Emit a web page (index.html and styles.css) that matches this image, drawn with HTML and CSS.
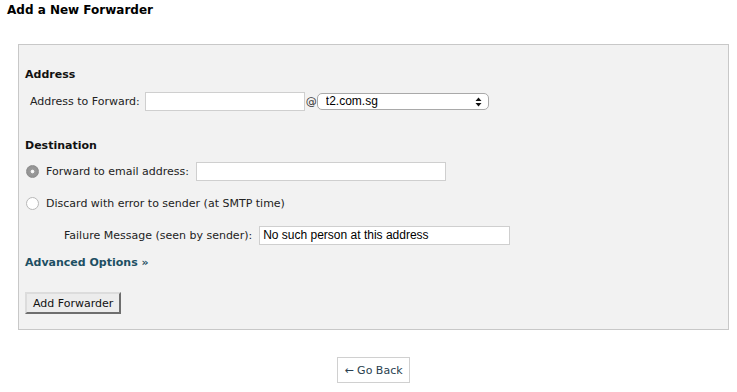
FILE: index.html
```html
<!DOCTYPE html>
<html>
<head>
<meta charset="utf-8">
<title>Add a New Forwarder</title>
<link rel="stylesheet" href="styles.css">
</head>
<body>
<h1 class="title">Add a New Forwarder</h1>
<form class="panel">
  <h2 class="section">Address</h2>
  <div class="row row-address">
    <label class="label">Address to Forward:</label>
    <input class="field field-addr" type="text">
    <span class="at">@</span>
    <div class="select-wrap">
      <select class="domain"><option>t2.com.sg</option></select>
      <svg class="select-arrow" width="7" height="10" viewBox="0 0 7 10"><path d="M3.5 0.5 L6.5 4 H0.5 Z M3.5 9.5 L6.5 6 H0.5 Z" fill="#111"/></svg>
    </div>
  </div>

  <h2 class="section section-dest">Destination</h2>
  <div class="row radio-row">
    <input class="radio" type="radio" name="fwd" checked>
    <label class="radio-label">Forward to email address:</label>
    <input class="field field-email" type="text">
  </div>
  <div class="row radio-row radio-row-2">
    <input class="radio" type="radio" name="fwd">
    <label class="radio-label">Discard with error to sender (at SMTP time)</label>
  </div>
  <div class="row failure-row">
    <label class="label label-fail">Failure Message (seen by sender):</label>
    <input class="field field-fail" type="text" value="No such person at this address">
  </div>
  <a class="advanced" href="#">Advanced Options »</a>
  <div class="actions">
    <button class="btn" type="button">Add Forwarder</button>
  </div>
</form>
<div class="back-wrap">
  <a class="back" href="#">← Go Back</a>
</div>
</body>
</html>
```
FILE: styles.css
```css
html, body {
  margin: 0;
  padding: 0;
  background: #fff;
}
body {
  font-family: "DejaVu Sans", Verdana, sans-serif;
  font-size: 11px;
  color: #111;
}
.title {
  margin: 0;
  padding: 3px 0 0 7px;
  font-size: 12px;
  font-weight: bold;
  line-height: 15px;
  color: #000;
}
.panel {
  box-sizing: border-box;
  width: 711px;
  height: 286px;
  margin: 26px 0 0 18px;
  padding: 22px 6px 0 6px;
  background: #f2f2f2;
  border: 1px solid #c8c8c8;
  display: flex;
  flex-direction: column;
  align-items: flex-start;
}
.section {
  margin: 0;
  font-size: 11px;
  font-weight: bold;
  line-height: 16px;
  color: #111;
}
.section-dest {
  margin-top: 27px;
}
.row {
  display: flex;
  align-items: center;
  height: 20px;
}
.row-address {
  margin-top: 8px;
  padding-left: 5px;
}
.label {
  margin-right: 5px;
  color: #222;
}
.label-fail {
  margin-right: 7px;
}
.field {
  box-sizing: border-box;
  height: 19px;
  margin: 0;
  padding: 1px 3px;
  background: #fff;
  border: 1px solid #cfcfcf;
  border-radius: 0;
  font-family: "Liberation Sans", Arial, sans-serif;
  font-size: 12px;
  color: #000;
  outline: none;
}
.field-addr { width: 160px; }
.field-email { width: 250px; }
.field-fail { width: 251px; }
.at {
  margin: 0 0 0 1px;
  font-size: 11px;
  color: #333;
}
.select-wrap {
  position: relative;
  width: 172px;
  height: 17px;
}
.domain {
  -webkit-appearance: none;
  appearance: none;
  box-sizing: border-box;
  width: 172px;
  height: 17px;
  margin: 0;
  padding: 0 0 0 8px;
  background: #fff;
  border: 1px solid #a9a9a9;
  border-radius: 5px;
  font-family: "Liberation Sans", Arial, sans-serif;
  font-size: 12px;
  line-height: 15px;
  color: #000;
  outline: none;
}
.select-arrow {
  position: absolute;
  right: 7px;
  top: 4px;
  pointer-events: none;
}
.radio-row {
  margin-top: 7px;
}
.radio-row-2 {
  margin-top: 12px;
}
.radio {
  -webkit-appearance: none;
  appearance: none;
  box-sizing: border-box;
  width: 13px;
  height: 13px;
  margin: 0 7px 0 1px;
  border: 1px solid #b8b8b8;
  border-radius: 50%;
  background: #fff;
  position: relative;
}
.radio:checked {
  border-color: #8c8c8c;
  background: radial-gradient(circle, #ffffff 0, #eeeeee 1.6px, #9a9a9a 2.2px, #8e8e8e 100%);
}
.radio-label {
  color: #222;
  margin-right: 7px;
}
.failure-row {
  margin-top: 12px;
  padding-left: 39px;
}
.advanced {
  margin-top: 10px;
  font-weight: bold;
  line-height: 16px;
  color: #1d4f63;
  text-decoration: none;
}
.actions {
  margin-top: 21px;
}
.btn {
  box-sizing: border-box;
  height: 22px;
  margin: 0;
  padding: 0 6px;
  background: #ececec;
  border: 2px solid;
  border-color: #dcdcdc #6e6e6e #6e6e6e #dcdcdc;
  border-radius: 0;
  font-family: "DejaVu Sans", Verdana, sans-serif;
  font-size: 11px;
  color: #111;
}
.back-wrap {
  width: 711px;
  margin-left: 18px;
  margin-top: 27px;
  display: flex;
  justify-content: center;
}
.back {
  box-sizing: border-box;
  height: 26px;
  padding: 0 6px;
  display: flex;
  align-items: center;
  border: 1px solid #d0d0d0;
  background: #fff;
  font-size: 11px;
  color: #2a3f4f;
  text-decoration: none;
}
```
